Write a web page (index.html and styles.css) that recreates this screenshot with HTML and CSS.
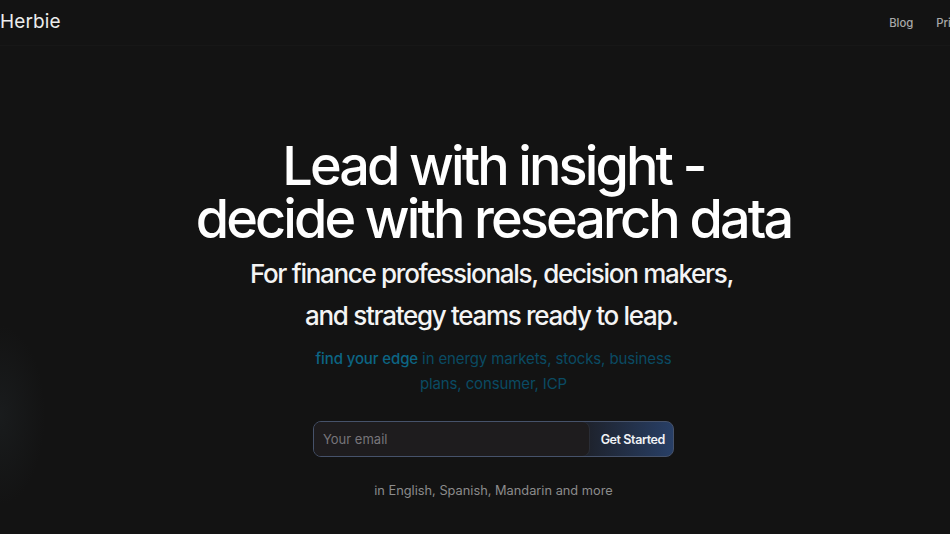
FILE: index.html
```html
<!DOCTYPE html>
<html lang="en">
<head>
<meta charset="utf-8">
<title>Herbie</title>
<link rel="stylesheet" href="styles.css">
</head>
<body>
<div class="page">
  <header class="header">
    <div class="logo">Herbie</div>
    <nav class="nav">
      <a class="nav-link" href="#">Blog</a>
      <a class="nav-link" href="#">Pricing</a>
    </nav>
  </header>
  <main class="hero">
    <h1 class="title">Lead with insight -<br>decide with research data</h1>
    <p class="subtitle">For finance professionals, decision makers,<br>and strategy teams ready to leap.</p>
    <p class="topics"><span class="topics-strong">find your edge</span> in energy markets, stocks, business plans, consumer, ICP</p>
    <form class="signup">
      <input class="email" type="email" placeholder="Your email">
      <button class="cta" type="button">Get Started</button>
    </form>
    <p class="langs">in English, Spanish, Mandarin and more</p>
  </main>
</div>
</body>
</html>
```
FILE: styles.css
```css
html, body {
  margin: 0;
  padding: 0;
  background: #131313;
  overflow: hidden;
  height: 100%;
}
body {
  font-family: Inter, "Noto Sans", sans-serif;
  color: #fff;
  background:
    radial-gradient(ellipse 45px 90px at 0 415px, rgba(40,48,52,0.3), rgba(19,19,19,0) 100%),
    #131313;
}
.page {
  width: 987px;
  min-height: 534px;
}
.header {
  height: 45px;
  border-bottom: 1px solid #171717;
  display: flex;
  align-items: center;
  justify-content: space-between;
}
.logo {
  font-size: 19px;
  color: #ececec;
  margin-top: -3px;
  letter-spacing: 0.1px;
}
.nav {
  display: flex;
  gap: 23px;
  margin-right: 13px;
}
.nav-link {
  font-size: 11.3px;
  font-weight: 500;
  color: #a8a8a8;
  text-decoration: none;
}
.hero {
  display: flex;
  flex-direction: column;
  align-items: center;
  text-align: center;
  padding-top: 93px;
}
.title {
  margin: 0;
  font-size: 54px;
  line-height: 53px;
  font-weight: 500;
  letter-spacing: -2.9px;
  color: #fff;
}
.subtitle {
  margin: 8px 0 0;
  font-size: 26px;
  line-height: 42px;
  font-weight: 500;
  letter-spacing: -1.3px;
  color: #f4f4f4;
  position: relative;
  left: -2px;
}
.topics {
  margin: 9px 0 0;
  width: 370px;
  font-size: 15px;
  line-height: 25px;
  letter-spacing: -0.12px;
  color: #0a4b63;
}
.topics-strong {
  color: #0c6584;
  font-weight: 500;
}
.signup {
  margin-top: 25px;
  width: 361px;
  height: 36px;
  box-sizing: border-box;
  display: flex;
  border: 1px solid #46526a;
  border-radius: 8px;
  background: linear-gradient(90deg, #1c1d22 72%, #283f66 100%);
}
.email {
  flex: 1;
  min-width: 0;
  border: none;
  border-radius: 7px;
  background: #1e1c1e;
  box-shadow: 1px 0 0 #2a2d36;
  color: #ddd;
  font-family: inherit;
  font-size: 13px;
  padding: 0 9px;
  outline: none;
}
.email::placeholder {
  color: #77757a;
}
.cta {
  border: none;
  background: transparent;
  color: #f0f2f6;
  font-family: inherit;
  font-size: 12.5px;
  font-weight: 600;
  padding: 0 8px 0 12px;
  letter-spacing: -0.4px;
}
.langs {
  margin: 26px 0 0;
  font-size: 12.8px;
  color: #8c8c8c;
}
```
